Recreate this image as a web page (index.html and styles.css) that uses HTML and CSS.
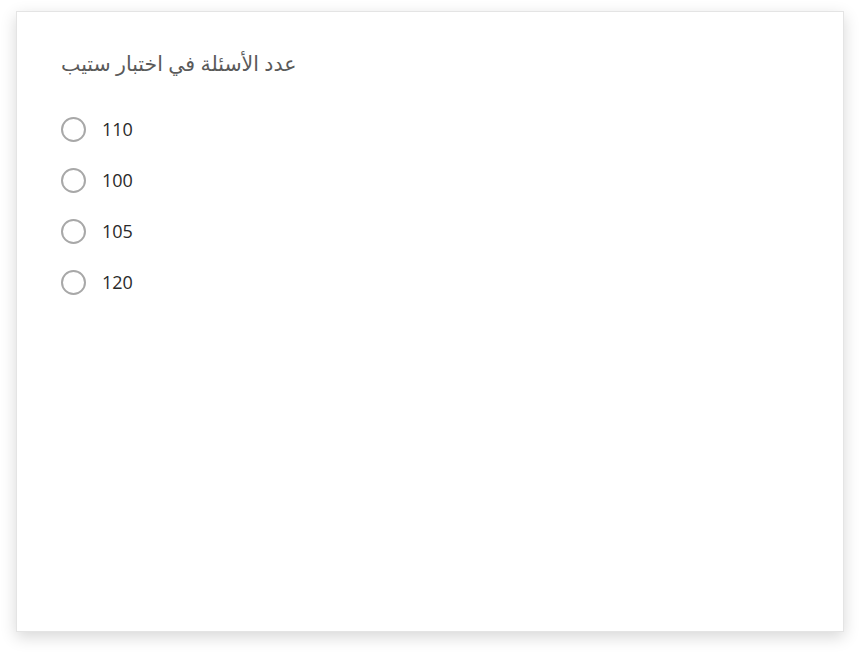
FILE: index.html
```html
<!DOCTYPE html>
<html lang="ar">
<head>
<meta charset="utf-8">
<link rel="stylesheet" href="styles.css">
</head>
<body>
<div class="card">
  <div class="title"><span dir="rtl">عدد الأسئلة في اختبار ستيب</span></div>
  <div class="options">
    <label class="option"><span class="radio"></span><span class="label">110</span></label>
    <label class="option"><span class="radio"></span><span class="label">100</span></label>
    <label class="option"><span class="radio"></span><span class="label">105</span></label>
    <label class="option"><span class="radio"></span><span class="label">120</span></label>
  </div>
</div>
</body>
</html>
```
FILE: styles.css
```css
html, body {
  margin: 0;
  padding: 0;
  background: #ffffff;
}
body {
  font-family: "Open Sans", "DejaVu Sans", sans-serif;
  padding-bottom: 21px;
}
.card {
  box-sizing: border-box;
  width: 828px;
  height: 621px;
  margin: 11px 0 0 16px;
  background: #fff;
  border: 1px solid #e4e4e4;
  box-shadow: 0 5px 15px rgba(0, 0, 0, 0.16);
  padding: 38px 44px 0 44px;
}
.title {
  font-size: 20.5px;
  color: #5a5a5a;
  line-height: 26px;
  height: 26px;
}
.options {
  margin-top: 41px;
  display: flex;
  flex-direction: column;
  gap: 27px;
}
.option {
  display: flex;
  align-items: center;
  height: 24px;
}
.radio {
  box-sizing: border-box;
  width: 25px;
  height: 25px;
  border: 2px solid #a8a8a8;
  border-radius: 50%;
  margin-right: 16px;
}
.label {
  font-size: 18px;
  color: #2a2a2a;
}
```
